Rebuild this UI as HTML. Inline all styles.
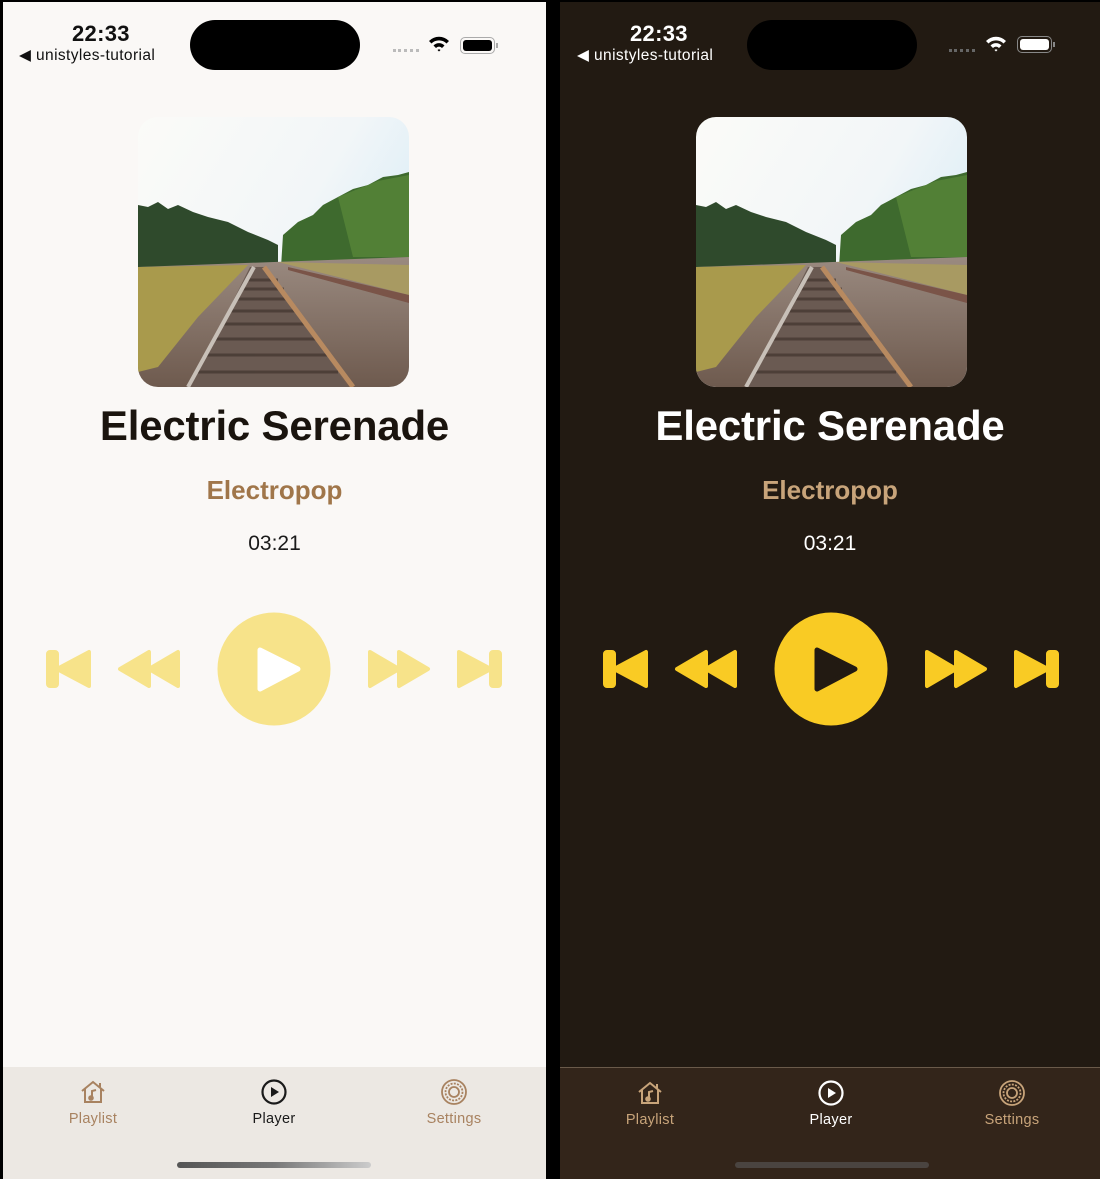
<!DOCTYPE html>
<html><head><meta charset="utf-8"><style>
*{margin:0;padding:0;box-sizing:border-box}
body{width:1100px;height:1179px;background:#000;position:relative;overflow:hidden;font-family:"Liberation Sans",sans-serif}
.p{position:absolute;top:2px;height:1177px;overflow:hidden}
.L{left:3px;width:543px;background:#faf8f6}
.D{left:560px;width:540px;background:#221a12}
.c{position:absolute;left:0;right:0;text-align:center;white-space:nowrap}
.time{position:absolute;font-size:22px;font-weight:bold;top:19px;letter-spacing:0.3px}
.app{position:absolute;font-size:15.5px;top:44px;letter-spacing:0.4px}
.island{position:absolute;top:18px;width:170px;height:50px;border-radius:25px;background:#000}
.title{top:400px;font-size:42px;font-weight:bold;letter-spacing:-0.2px}
.genre{top:473px;font-size:26px;font-weight:bold}
.dur{top:530px;font-size:21px}
.photo{position:absolute;top:115px;width:271px;height:270px;border-radius:20px;overflow:hidden}
.ctl{position:absolute;top:608px;width:460px;height:120px}
.tab{position:absolute;left:0;right:0;top:1065px;height:112px}
.ti{position:absolute;top:12px;width:120px;text-align:center;font-size:14.5px;letter-spacing:0.3px}
.ti svg{display:block;margin:0 auto 6px}
.hb{position:absolute;top:1160px;width:194px;height:6px;border-radius:3px}
</style></head><body>
<svg width="0" height="0" style="position:absolute">
<defs>
<linearGradient id="sky" x1="0" y1="0" x2="1" y2="0.6"><stop offset="0" stop-color="#fbfbf8"/><stop offset="0.6" stop-color="#f2f6f8"/><stop offset="1" stop-color="#d8ecf6"/></linearGradient>
<linearGradient id="gr" x1="0" y1="0" x2="0" y2="1"><stop offset="0" stop-color="#9a8a80"/><stop offset="1" stop-color="#6e5a4e"/></linearGradient>
<symbol id="ph" viewBox="0 0 271 270">
<rect width="271" height="270" fill="url(#sky)"/>
<path d="M0 88 L10 90 L20 85 L30 92 L40 88 L55 95 L70 100 L90 105 L110 115 L130 123 L140 128 L140 150 L0 160Z" fill="#2f4a2c"/>
<path d="M143 150 L145 118 L160 105 L175 98 L185 88 L200 80 L215 72 L230 68 L245 60 L260 58 L271 55 L271 150Z" fill="#3e6a2e"/>
<path d="M200 80 L240 64 L271 58 L271 140 L215 140Z" fill="#5b8a3a" opacity="0.7"/>
<path d="M0 150 L271 140 L271 270 L0 270Z" fill="url(#gr)"/>
<path d="M0 150 L110 148 L60 200 L20 250 L0 255Z" fill="#a99a4c"/>
<path d="M140 145 L271 148 L271 178 L200 160Z" fill="#a89a62"/>
<path d="M150 150 L271 178 L271 186 L150 153Z" fill="#7a5448"/>
<path d="M112 150 L52 270 L210 270 L128 150Z" fill="#6a5a52"/>
<g stroke="#3a2e28" stroke-width="3" opacity="0.6"><path d="M60 255 H200 M68 238 H190 M76 222 H178 M84 207 H168 M91 194 H160 M98 182 H152 M103 172 H146 M108 163 H140"/></g>
<path d="M116 150 L50 270" stroke="#c8c0b8" stroke-width="4"/>
<path d="M126 150 L215 270" stroke="#b88a60" stroke-width="5"/>
</symbol>
<symbol id="ctl" viewBox="0 0 460 120">
<g stroke-linejoin="round" stroke-width="4">
<rect x="4" y="42" width="9" height="34" rx="2"/>
<path d="M13 59 L45 42 L45 76Z"/>
<path d="M76 59 L105 42 L105 76Z M105 59 L134 42 L134 76Z"/>
<path d="M326 42 L355 59 L326 76Z M355 42 L384 59 L355 76Z"/>
<path d="M415 42 L447 59 L415 76Z"/>
<rect x="447" y="42" width="9" height="34" rx="2"/>
</g>
<circle cx="230" cy="59" r="56.5" stroke="none"/>
</symbol>
</defs>
</svg>

<!-- LIGHT -->
<div class="p L">
<div class="time" style="left:69px;color:#111">22:33</div>
<div class="app" style="left:16px;color:#111">◀ unistyles-tutorial</div>
<div class="island" style="left:187px"></div>
<div style="position:absolute;left:390px;top:47px;width:26px;border-top:3px dotted #bbb"></div>
<svg style="position:absolute;left:425px;top:33px" width="22" height="17" viewBox="0 0 22 17"><path d="M1 6 A14 14 0 0 1 21 6 L18.5 8.5 A10.5 10.5 0 0 0 3.5 8.5Z M5.5 10.5 A7.5 7.5 0 0 1 16.5 10.5 L14 13 A4 4 0 0 0 8 13Z M9.5 15 A2 2 0 0 1 12.5 15 L11 16.5Z" fill="#000"/></svg>
<div style="position:absolute;left:457px;top:35px;width:35px;height:17px;border:1.5px solid #aaa;border-radius:5px;padding:2px"><div style="background:#000;height:100%;border-radius:3px"></div></div>
<div style="position:absolute;left:493px;top:41px;width:2px;height:5px;background:#aaa"></div>
<svg class="photo" style="left:135px" viewBox="0 0 271 270"><use href="#ph"/></svg>
<div class="c title" style="color:#1a140e">Electric Serenade</div>
<div class="c genre" style="color:#a0764a">Electropop</div>
<div class="c dur" style="color:#1a1a1a">03:21</div>
<svg class="ctl" style="left:41px" viewBox="0 0 460 120" fill="#f7e38a" stroke="#f7e38a"><use href="#ctl"/><path d="M216 40 L254 59 L216 79Z" fill="#fff" stroke="#fff" stroke-width="5" stroke-linejoin="round"/></svg>
<div class="tab" style="background:#ece8e3">
<div class="ti" style="left:30px;color:#a88260"><svg width="28" height="26" viewBox="0 0 28 26" fill="none" stroke="#a88260" stroke-width="2"><path d="M3 12 L14 3 L25 12 M6 10 V23 H22 V10 M21 4 V8"/><path d="M13 19 V12 L17 11" /><circle cx="12" cy="19" r="1.8" fill="#a88260"/></svg>Playlist</div>
<div class="ti" style="left:211px;color:#1a1a1a"><svg width="28" height="26" viewBox="0 0 28 26"><circle cx="14" cy="13" r="11.5" fill="none" stroke="#1a1a1a" stroke-width="2.2"/><path d="M11 8 L19 13 L11 18Z" fill="#1a1a1a"/></svg>Player</div>
<div class="ti" style="left:391px;color:#a88260"><svg width="28" height="26" viewBox="0 0 28 26" fill="none" stroke="#a88260" stroke-width="1.8"><circle cx="14" cy="13" r="12"/><circle cx="14" cy="13" r="8.5" stroke-dasharray="2 1.3"/><circle cx="14" cy="13" r="5"/></svg>Settings</div>
</div>
<div class="hb" style="left:174px;background:linear-gradient(90deg,#555,#777,#ccc)"></div>
</div>

<!-- DARK -->
<div class="p D">
<div class="time" style="left:70px;color:#fff">22:33</div>
<div class="app" style="left:17px;color:#fff">◀ unistyles-tutorial</div>
<div class="island" style="left:187px"></div>
<div style="position:absolute;left:389px;top:47px;width:26px;border-top:3px dotted #666"></div>
<svg style="position:absolute;left:425px;top:33px" width="22" height="17" viewBox="0 0 22 17"><path d="M1 6 A14 14 0 0 1 21 6 L18.5 8.5 A10.5 10.5 0 0 0 3.5 8.5Z M5.5 10.5 A7.5 7.5 0 0 1 16.5 10.5 L14 13 A4 4 0 0 0 8 13Z M9.5 15 A2 2 0 0 1 12.5 15 L11 16.5Z" fill="#fff"/></svg>
<div style="position:absolute;left:457px;top:34px;width:35px;height:17px;border:1.5px solid #888;border-radius:5px;padding:2px"><div style="background:#fff;height:100%;border-radius:3px"></div></div>
<div style="position:absolute;left:493px;top:40px;width:2px;height:5px;background:#888"></div>
<svg class="photo" style="left:136px" viewBox="0 0 271 270"><use href="#ph"/></svg>
<div class="c title" style="color:#fff">Electric Serenade</div>
<div class="c genre" style="color:#c8a47a">Electropop</div>
<div class="c dur" style="color:#fff">03:21</div>
<svg class="ctl" style="left:41px" viewBox="0 0 460 120" fill="#f9cb24" stroke="#f9cb24"><use href="#ctl"/><path d="M216 40 L254 59 L216 79Z" fill="#221a12" stroke="#221a12" stroke-width="5" stroke-linejoin="round"/></svg>
<div class="tab" style="background:#33251a;border-top:1px solid #6a5a4a">
<div class="ti" style="left:30px;color:#c8a47a"><svg width="28" height="26" viewBox="0 0 28 26" fill="none" stroke="#c8a47a" stroke-width="2"><path d="M3 12 L14 3 L25 12 M6 10 V23 H22 V10 M21 4 V8"/><path d="M13 19 V12 L17 11"/><circle cx="12" cy="19" r="1.8" fill="#c8a47a"/></svg>Playlist</div>
<div class="ti" style="left:211px;color:#fff"><svg width="28" height="26" viewBox="0 0 28 26"><circle cx="14" cy="13" r="11.5" fill="none" stroke="#fff" stroke-width="2.2"/><path d="M11 8 L19 13 L11 18Z" fill="#fff"/></svg>Player</div>
<div class="ti" style="left:392px;color:#c8a47a"><svg width="28" height="26" viewBox="0 0 28 26" fill="none" stroke="#c8a47a" stroke-width="1.8"><circle cx="14" cy="13" r="12"/><circle cx="14" cy="13" r="8.5" stroke-dasharray="2 1.3"/><circle cx="14" cy="13" r="5"/></svg>Settings</div>
</div>
<div class="hb" style="left:175px;background:#4a4440"></div>
</div>
</body></html>
